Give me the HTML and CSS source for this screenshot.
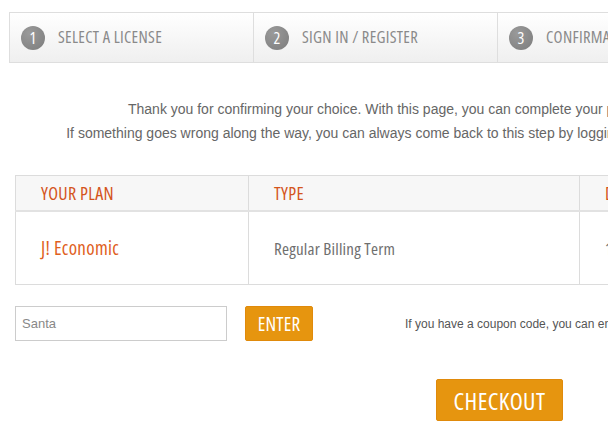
FILE: index.html
```html
<!DOCTYPE html>
<html>
<head>
<meta charset="utf-8">
<link rel="stylesheet" href="styles.css">
</head>
<body>
<div class="page">
  <ol class="steps">
    <li class="step"><span class="num">1</span><span class="label">SELECT A LICENSE</span></li>
    <li class="step"><span class="num">2</span><span class="label">SIGN IN / REGISTER</span></li>
    <li class="step"><span class="num">3</span><span class="label">CONFIRMATION</span></li>
  </ol>
  <div class="content">
    <div class="intro">
      <p>Thank you for confirming your choice. With this page, you can complete your purchase.</p>
      <p>If something goes wrong along the way, you can always come back to this step by logging in to your profile.</p>
    </div>
    <table class="plan">
      <thead>
        <tr><th class="c1">YOUR PLAN</th><th class="c2">TYPE</th><th class="c3">DURATION</th></tr>
      </thead>
      <tbody>
        <tr><td class="c1 name">J! Economic</td><td class="c2">Regular Billing Term</td><td class="c3">1 Year</td></tr>
      </tbody>
    </table>
    <div class="coupon">
      <input class="code" type="text" placeholder="Santa">
      <button class="btn enter">ENTER</button>
      <span class="hint">If you have a coupon code, you can enter it here and press the Enter button.</span>
    </div>
    <div class="actions">
      <button class="btn checkout">CHECKOUT</button>
    </div>
  </div>
</div>
</body>
</html>
```
FILE: styles.css
```css
html, body { margin: 0; padding: 0; background: #fff; }
body { overflow-x: hidden; font-family: "Liberation Sans", Arial, sans-serif; }
.page { width: 980px; padding: 12px 0 0 9px; }
.steps {
  list-style: none; margin: 0; padding: 0;
  display: flex;
  border-top: 1px solid #dedede; border-bottom: 1px solid #dedede;
  background: linear-gradient(#ffffff, #efefef);
}
.step {
  width: 244px; height: 49px;
  display: flex; align-items: center;
  border-left: 1px solid #dedede;
  box-sizing: border-box;
}
.num {
  width: 24px; height: 24px; border-radius: 50%;
  background: radial-gradient(circle at 35% 30%, #9a9a9a, #7c7c7c);
  color: #fff; margin-left: 11px; margin-right: 13px;
  display: flex; align-items: center; justify-content: center;
  font-family: "Open Sans", sans-serif; font-stretch: 75%;
  font-size: 16px; line-height: 1;
}
.label {
  font-family: "Open Sans", sans-serif; font-stretch: 75%;
  font-size: 16.5px; letter-spacing: 0.3px; color: #8a8a8a; line-height: 1;
}
.content { padding: 0 0 0 6px; }
.intro { width: 766px; text-align: center; color: #666; font-size: 14px; padding-top: 34px; }
.intro p { margin: 0; line-height: 24px; }
.plan {
  margin-top: 30px; border-collapse: collapse; width: 800px;
  border: 1px solid #dcdcdc;
}
.plan th, .plan td { text-align: left; font-family: "Open Sans", sans-serif; font-stretch: 75%; }
.plan th {
  background: #f7f7f7; color: #d4541c; font-weight: normal; font-size: 18px; letter-spacing: 0.3px;
  height: 34px; padding: 0 0 0 25px; border-bottom: 2px solid #e2e2e2; border-left: 1px solid #dcdcdc;
}
.plan td { height: 72px; padding: 0 0 0 25px; border-left: 1px solid #dcdcdc; color: #6f6f6f; font-size: 17px; letter-spacing: 0.2px; }
.plan td.name { color: #e0601c; font-size: 19px; letter-spacing: 0.3px; }
.c1 { width: 207px; }
.c2 { width: 305px; }
.coupon { display: flex; align-items: center; margin-top: 21px; }
.code {
  width: 212px; height: 35px; box-sizing: border-box;
  border: 1px solid #cccccc; padding: 0 6px;
  font-family: "Liberation Sans", Arial, sans-serif; font-size: 13px; color: #666;
}
.code::placeholder { color: #888; }
.btn {
  background: #e6950f; color: #fff; border: 1px solid #e08a0b; border-radius: 2px;
  font-family: "Open Sans", sans-serif; font-stretch: 75%;
}
.enter { margin-left: 18px; width: 68px; height: 35px; font-size: 19px; letter-spacing: 0.2px; padding: 0; }
.hint { margin-left: 92px; font-size: 12px; color: #555; white-space: nowrap; }
.actions { padding: 38px 0 0 421px; }
.checkout { width: 127px; height: 42px; font-size: 24px; letter-spacing: 0.4px; padding: 0; }
```
